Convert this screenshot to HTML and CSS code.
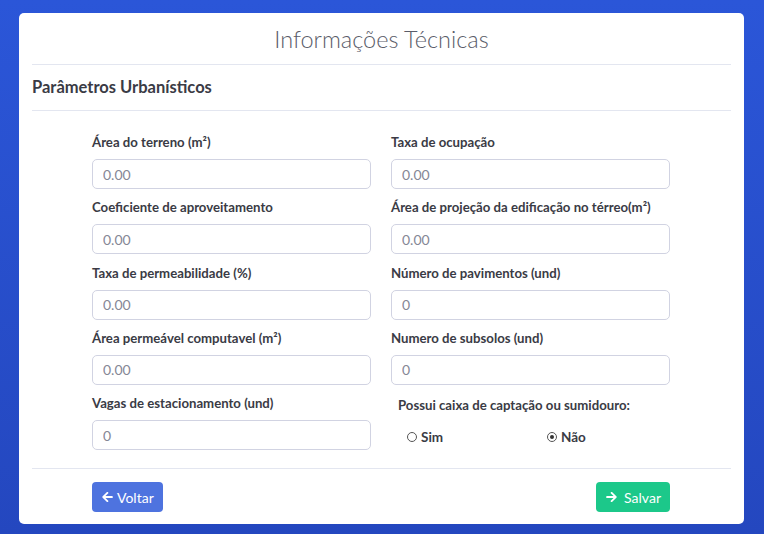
FILE: index.html
```html
<!DOCTYPE html>
<html>
<head>
    <meta charset="utf-8">
    <link rel="stylesheet" href="styles.css">
</head>
<body>

    <div class="card">
        <h1 class="card-title">Informações Técnicas</h1>
        <div class="card-body">
            <hr>
            <h2 class="section-title">Parâmetros Urbanísticos</h2>
            <hr>

            <form class="form-grid">
                <div class="field">
                    <label>Área do terreno (m²)</label>
                    <input type="text" class="form-control" value="0.00">
                </div>
                <div class="field">
                    <label>Taxa de ocupação</label>
                    <input type="text" class="form-control" value="0.00">
                </div>
                <div class="field">
                    <label>Coeficiente de aproveitamento</label>
                    <input type="text" class="form-control" value="0.00">
                </div>
                <div class="field">
                    <label>Área de projeção da edificação no térreo(m²)</label>
                    <input type="text" class="form-control" value="0.00">
                </div>
                <div class="field">
                    <label>Taxa de permeabilidade (%)</label>
                    <input type="text" class="form-control" value="0.00">
                </div>
                <div class="field">
                    <label>Número de pavimentos (und)</label>
                    <input type="text" class="form-control" value="0">
                </div>
                <div class="field">
                    <label>Área permeável computavel (m²)</label>
                    <input type="text" class="form-control" value="0.00">
                </div>
                <div class="field">
                    <label>Numero de subsolos (und)</label>
                    <input type="text" class="form-control" value="0">
                </div>
                <div class="field">
                    <label>Vagas de estacionamento (und)</label>
                    <input type="text" class="form-control" value="0">
                </div>
                <div class="field radio-field">
                    <label>Possui caixa de captação ou sumidouro:</label>
                    <div class="radio-group">
                        <label class="radio"><input type="radio" name="caixa"> Sim</label>
                        <label class="radio"><input type="radio" name="caixa" checked> Não</label>
                    </div>
                </div>
            </form>

            <hr>

            <div class="actions">
                <button class="btn btn-primary">
                    <svg viewBox="0 0 448 512"><path d="M257.5 445.1l-22.2 22.2c-9.4 9.4-24.6 9.4-33.9 0L7 273c-9.4-9.4-9.4-24.6 0-33.9L201.4 44.7c9.4-9.4 24.6-9.4 33.9 0l22.2 22.2c9.5 9.5 9.3 25-.4 34.3L136.6 216H424c13.3 0 24 10.7 24 24v32c0 13.3-10.7 24-24 24H136.6l120.5 114.8c9.8 9.3 10 24.8.4 34.3z"/></svg>
                    Voltar
                </button>
                <button class="btn btn-success">
                    <svg viewBox="0 0 448 512"><path d="M190.5 66.9l22.2-22.2c9.4-9.4 24.6-9.4 33.9 0L441 239c9.4 9.4 9.4 24.6 0 33.9L246.6 467.3c-9.4 9.4-24.6 9.4-33.9 0l-22.2-22.2c-9.5-9.5-9.3-25 .4-34.3L311.4 296H24c-13.3 0-24-10.7-24-24v-32c0-13.3 10.7-24 24-24h287.4L190.9 101.2c-9.8-9.3-10-24.8-.4-34.3z"/></svg>
                    Salvar
                </button>
            </div>
        </div>
    </div>

</body>
</html>
```

FILE: styles.css
```css
html, body {
    height: 100%;
}
body {
    margin: 0;
    padding: 13px 20px 10px 19px;
    box-sizing: border-box;
    font-family: 'Lato', 'Noto Sans', sans-serif;
    background: linear-gradient(180deg, #2b56d8 0%, #2447bf 100%);
    color: #3a3b45;
}
.card {
    background-color: #fff;
    border-radius: 5px;
    height: 511px;
}
.card-title {
    margin: 0;
    padding: 13px 0 12px;
    font-size: 23.5px;
    line-height: 26px;
    font-weight: 300;
    text-align: center;
    color: #5a5c69;
}
.card-body {
    padding: 0 13px 13px;
}
hr {
    margin: 0;
    border: none;
    border-top: 1px solid #e3e6f0;
}
.section-title {
    margin: 0;
    padding: 11px 0 12px;
    font-size: 16.5px;
    line-height: 22px;
    font-weight: 700;
    color: #3a3b45;
}
.form-grid {
    display: grid;
    grid-template-columns: 1fr 1fr;
    column-gap: 20px;
    row-gap: 8.25px;
    padding: 21px 61px 18px 60px;
}
.field {
    display: flex;
    flex-direction: column;
}
.field > label {
    font-size: 13.2px;
    line-height: 18px;
    font-weight: 700;
    color: #3a3b45;
    margin-top: 1px;
    margin-bottom: 8px;
}
.form-control {
    height: 30px;
    box-sizing: border-box;
    border: 1px solid #d1d3e2;
    border-radius: 5px;
    padding: 0 10px;
    font-family: inherit;
    font-size: 14px;
    color: #858796;
    outline: none;
}
.radio-field > label {
    margin-left: 7px;
    margin-top: 3px;
    margin-bottom: 15px;
}
.radio-group {
    display: grid;
    grid-template-columns: 140px 1fr;
    padding-left: 16px;
}
.radio {
    display: flex;
    align-items: center;
    gap: 4px;
    font-size: 13.5px;
    font-weight: 700;
    color: #3a3b45;
}
.radio input {
    appearance: none;
    margin: 0;
    width: 10px;
    height: 10px;
    border: 1px solid #555;
    border-radius: 50%;
    box-sizing: border-box;
    display: grid;
    place-items: center;
}
.radio input:checked::after {
    content: '';
    width: 4px;
    height: 4px;
    border-radius: 50%;
    background-color: #333;
}
.actions {
    display: flex;
    justify-content: space-between;
    padding: 13px 61px 0 60px;
}
.btn {
    display: flex;
    align-items: center;
    gap: 4px;
    height: 30px;
    padding: 0 9px 0 10px;
    border: none;
    border-radius: 4px;
    font-family: inherit;
    font-size: 14px;
    color: #fff;
    cursor: pointer;
}
.btn svg {
    width: 11px;
    height: 12px;
    fill: #fff;
}
.btn-primary {
    background-color: #4e73df;
}
.btn-success {
    background-color: #1cc88a;
    gap: 7px;
}
```
